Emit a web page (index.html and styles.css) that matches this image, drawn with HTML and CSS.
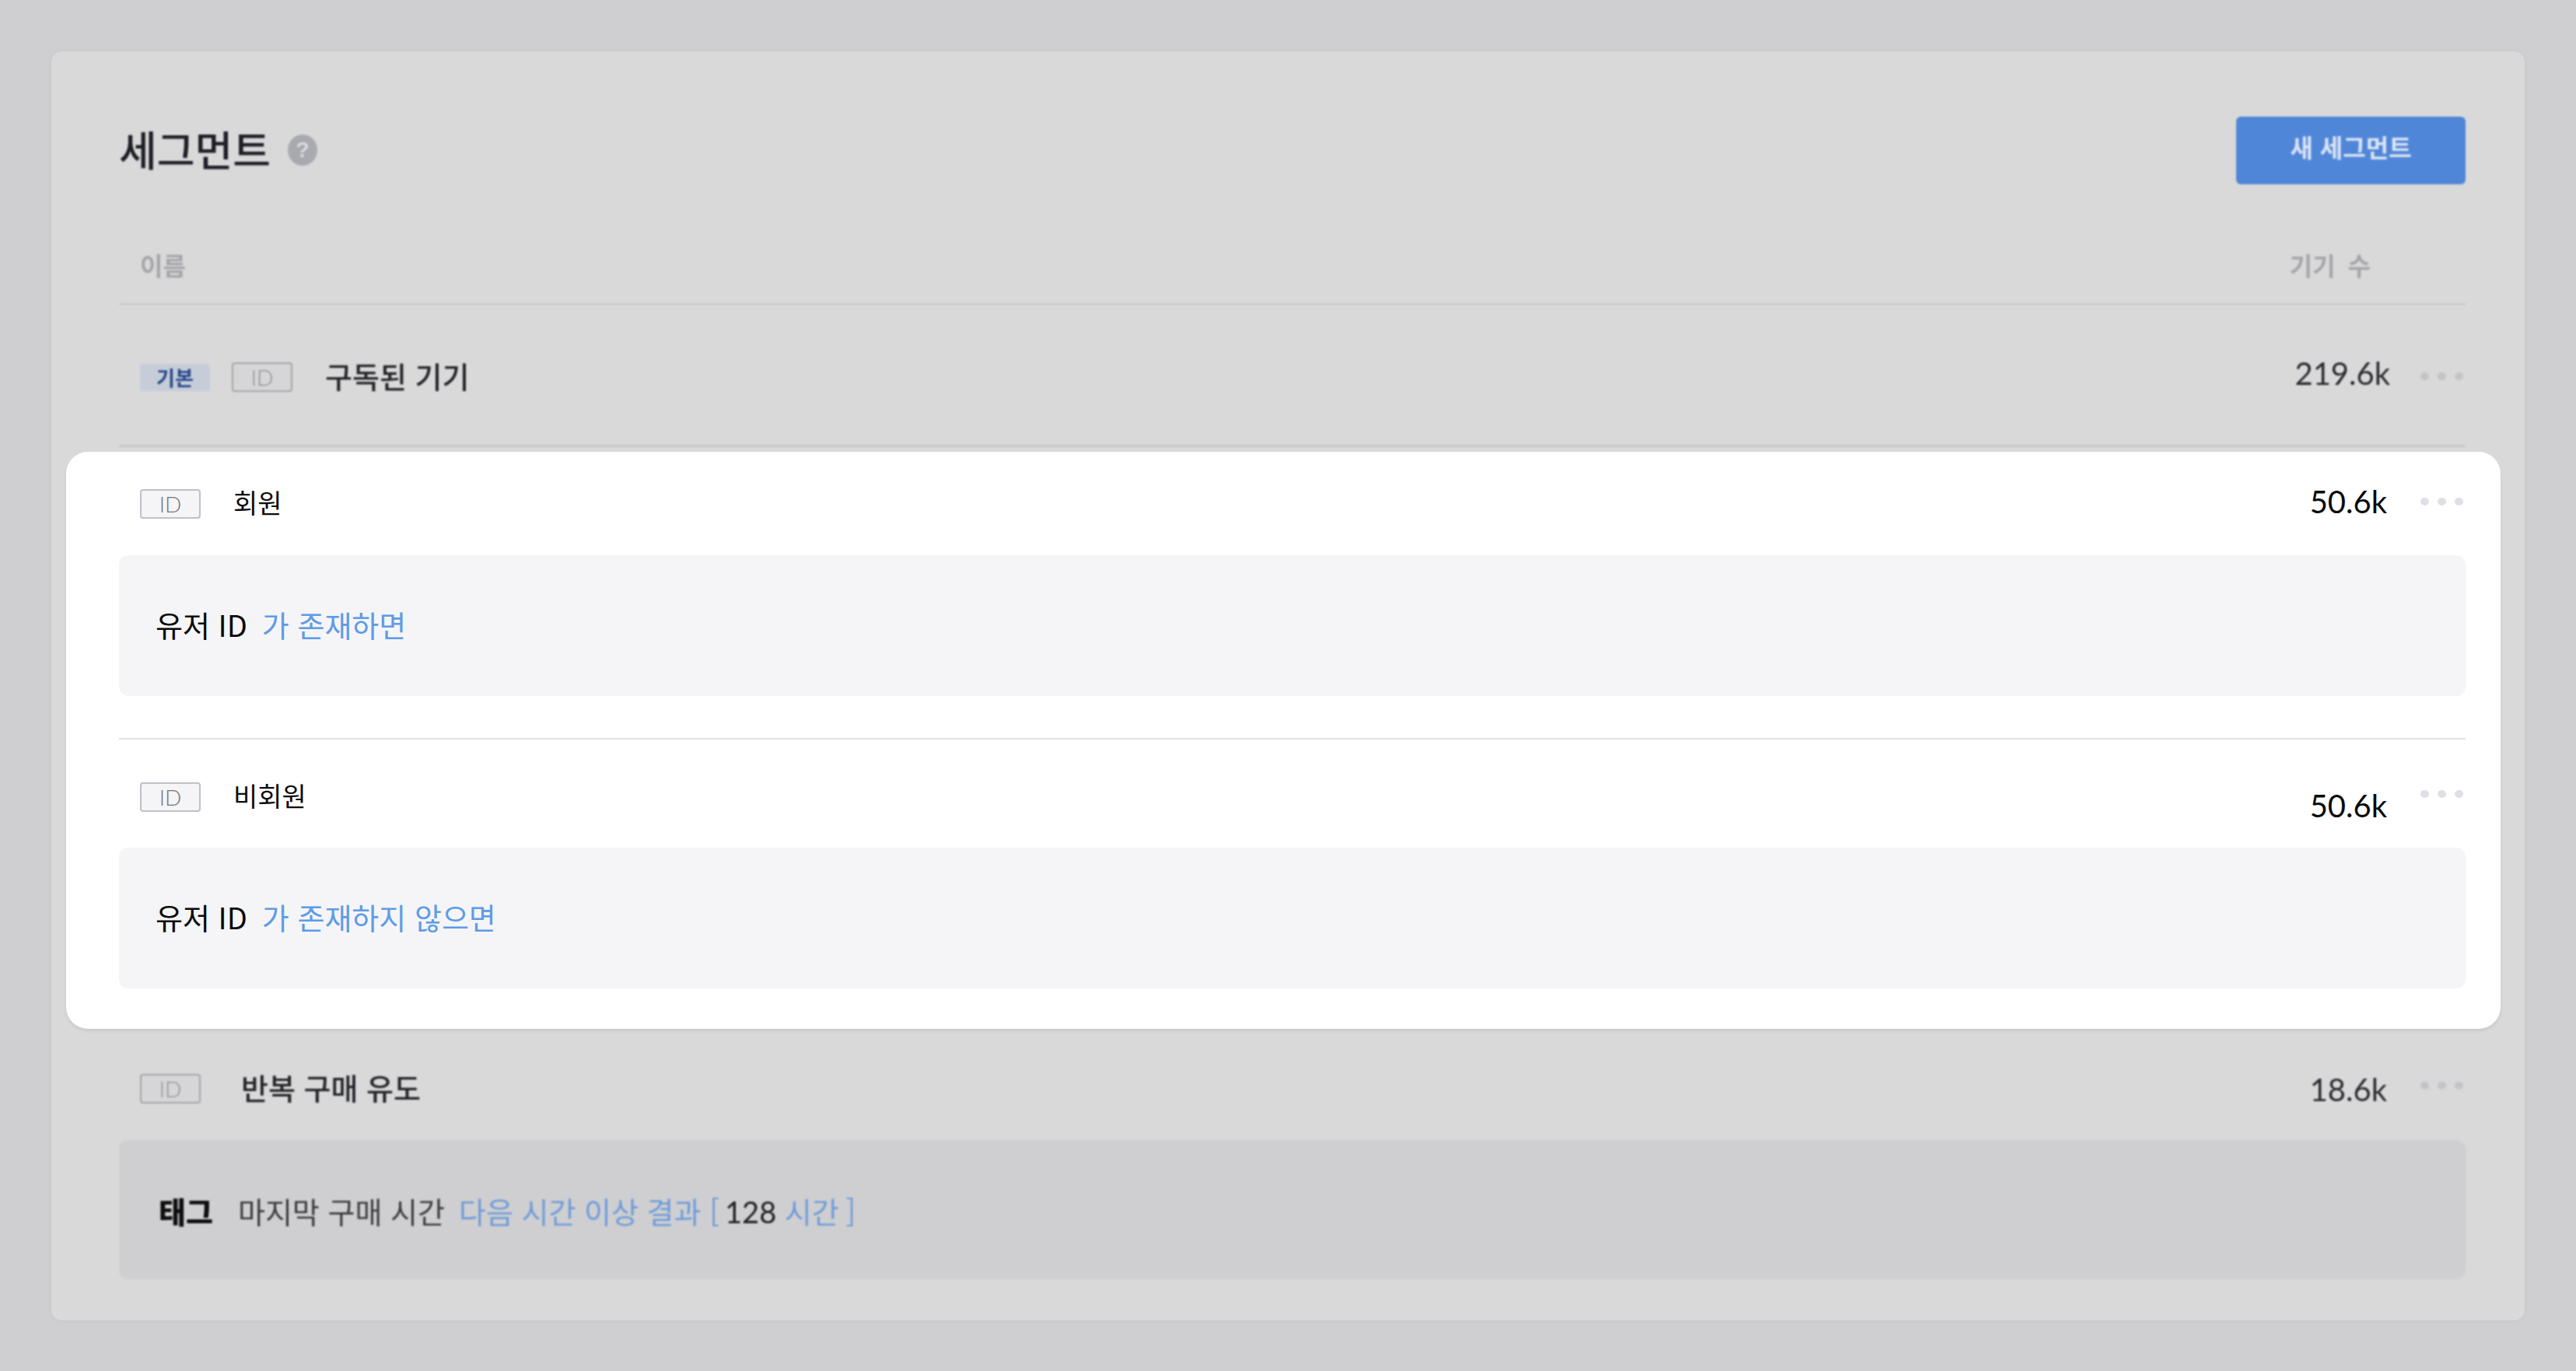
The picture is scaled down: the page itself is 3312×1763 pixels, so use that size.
FILE: index.html
```html
<!DOCTYPE html>
<html lang="ko">
<head>
<meta charset="utf-8">
<title>세그먼트</title>
<link rel="stylesheet" href="styles.css">
</head>
<body>
<main class="card">
  <div class="dim">
    <header class="top">
      <div class="title-group">
        <h1 class="title">세그먼트</h1>
        <span class="help">?</span>
      </div>
      <button class="primary">새 세그먼트</button>
    </header>
    <div class="table-head">
      <span>이름</span>
      <span class="head-count">기기 수</span>
    </div>
    <div class="row row-default">
      <div class="row-main">
        <span class="badge badge-default">기본</span>
        <span class="badge badge-id badge-id-dim">ID</span>
        <span class="name name-dim name-default">구독된 기기</span>
      </div>
      <span class="count count-dim count-wide">219.6k</span>
      <span class="dots dots-dim"><i></i><i></i><i></i></span>
    </div>
  </div>

  <section class="focus">
    <div class="row row-member">
      <div class="row-main">
        <span class="badge badge-id">ID</span>
        <span class="name">회원</span>
      </div>
      <span class="count">50.6k</span>
      <span class="dots"><i></i><i></i><i></i></span>
    </div>
    <div class="rule-box"><span class="ink">유저 ID</span><span class="link">가 존재하면</span></div>
    <div class="split"></div>
    <div class="row row-guest">
      <div class="row-main">
        <span class="badge badge-id">ID</span>
        <span class="name">비회원</span>
      </div>
      <span class="count count-low">50.6k</span>
      <span class="dots"><i></i><i></i><i></i></span>
    </div>
    <div class="rule-box"><span class="ink">유저 ID</span><span class="link">가 존재하지 않으면</span></div>
  </section>

  <div class="dim">
    <div class="row row-repeat">
      <div class="row-main">
        <span class="badge badge-id badge-id-dim">ID</span>
        <span class="name name-dim name-repeat">반복 구매 유도</span>
      </div>
      <span class="count count-dim count-repeat">18.6k</span>
      <span class="dots dots-dim"><i></i><i></i><i></i></span>
    </div>
    <div class="rule-box rule-box-dim">
      <strong class="tag">태그</strong>
      <span class="ink-dim">마지막 구매 시간</span>
      <span class="link link-dim">다음 시간 이상 결과 <span class="bracket">[</span><span class="num">128</span> 시간 <span class="bracket-end">]</span></span>
    </div>
  </div>
</main>
</body>
</html>
```
FILE: styles.css
```css
* { box-sizing: border-box; }
html, body { margin: 0; height: 100%; }
body {
  background: #cfcfd1;
  padding: 66px;
  overflow: hidden;
  font-family: "Noto Sans CJK KR", "Noto Sans", sans-serif;
}
.card {
  width: 3180px;
  height: 1632px;
  background: #d9d9da;
  border-radius: 14px;
  padding: 84px 76px 0 87px;
  box-shadow: 0 0 6px rgba(0, 0, 0, .04);
}
.dim { filter: blur(1px); }

.top { display: flex; justify-content: space-between; align-items: flex-start; height: 87px; }
.title-group { display: flex; align-items: center; gap: 22px; height: 82px; }
.title { margin: 0; font-size: 53px; line-height: 74px; font-weight: 500; color: #1d1e26; }
.help {
  width: 38px; height: 40px; border-radius: 50%;
  background: #a9aab0; color: #dcdcdf;
  font: 700 28px/40px "Liberation Sans", sans-serif;
  text-align: center; margin-top: 4px;
}
.primary {
  width: 295px; height: 87px;
  background: #5086d8; color: #d9e4f4;
  border: 0; border-radius: 6px;
  font: 700 32px/1 "Noto Sans CJK KR", sans-serif;
  padding: 0 0 11px;
}

.table-head {
  display: flex; justify-content: space-between;
  height: 155px;
  padding: 83px 122px 0 27px;
  font-size: 32px; line-height: 40px; font-weight: 700;
  color: #a6a6aa;
  border-bottom: 2px solid #c8c8ca;
}
.head-count { word-spacing: 7px; }

.row { display: flex; padding: 0 5px 0 27px; }
.row-main { flex: 1; display: flex; align-items: center; }
.row-default { height: 183px; padding-top: 69px; align-items: flex-start; border-bottom: 3px solid #c9c9cb; margin-bottom: 6px; }
.row-member { height: 133px; padding-top: 43px; align-items: flex-start; }
.row-guest { height: 139px; padding-top: 50px; align-items: flex-start; }
.row-repeat { height: 143px; padding-top: 53px; align-items: flex-start; }

.badge {
  display: flex; align-items: center; justify-content: center;
  height: 38px; border-radius: 4px; font-size: 24px; line-height: 1;
}
.badge-default {
  width: 90px; height: 35px; margin: 5px 28px 0 0;
  background: #c7cdd8; color: #24478c; font-weight: 700; font-size: 26px;
}
.badge-id {
  width: 78px; margin: 5px 42px 0 0;
  background: #f5f5f7; border: 2px solid #c0c0c8; color: #75757c;
  font-family: "Lato", sans-serif; font-weight: 300; font-size: 28px;
}
.badge-id-dim { background: #d6d6d8; border-color: #a6a6aa; color: #8f8f94; }
.name { font-size: 34px; line-height: 40px; color: #0c0c0e; }
.name-dim { color: #232428; font-weight: 500; }
.name-default { font-size: 38px; margin-left: 2px; }
.name-repeat { font-size: 38px; margin-left: 10px; }
.row-default .badge-id { margin-right: 40px; }

.count { font: 400 40px/40px "Lato", sans-serif; color: #0a0a0a; }
.row-member .count { margin-top: 1px; }
.row-member .dots { margin-top: 16px; }
.count-dim { color: #2a2b2f; }
.count-wide { margin: -1px -4px 0 0; }
.count-low { margin-top: 15px; }
.count-repeat { margin-top: 5px; }
.dots { display: flex; gap: 11px; margin: 15px 0 0 43px; width: 53px; height: 10px; }
.dots i { flex: none; width: 11px; height: 10px; border-radius: 50%; background: #dfdfe6; }
.dots-dim i { background: #c4c4c8; }
.row-default .dots { margin-top: 18px; }
.row-guest .dots { margin-top: 15px; }
.row-repeat .dots { margin-top: 15px; }

.focus {
  margin: 0 -45px 0 -68px;
  width: 3130px;
  height: 742px;
  padding: 0 45px 0 68px;
  background: #fff;
  border-radius: 28px;
  box-shadow: 0 3px 4px rgba(0, 0, 0, .07);
  position: relative;
}
.rule-box {
  display: flex; align-items: center; gap: 19px;
  height: 181px;
  padding: 0 47px 4px;
  background: #f5f5f7;
  border-radius: 12px;
  font-size: 38px; line-height: 48px;
}
.ink { color: #0a0a0a; }
.link { color: #5f9be6; }
.split { height: 2px; margin-top: 54px; background: #e2e2e5; }

.rule-box-dim { height: 179px; background: #cfcfd1; gap: 18px; padding: 3px 48px 0 51px; }
.tag { font-size: 38px; font-weight: 900; color: #0f0f10; margin-right: 14px; }
.ink-dim { color: #3a3b3f; }
.link-dim { color: #6f9bd8; }
.bracket { margin-right: 7px; }
.num { color: #202124; font-family: "Lato", sans-serif; }
.bracket-end { margin-left: -2px; }
```
